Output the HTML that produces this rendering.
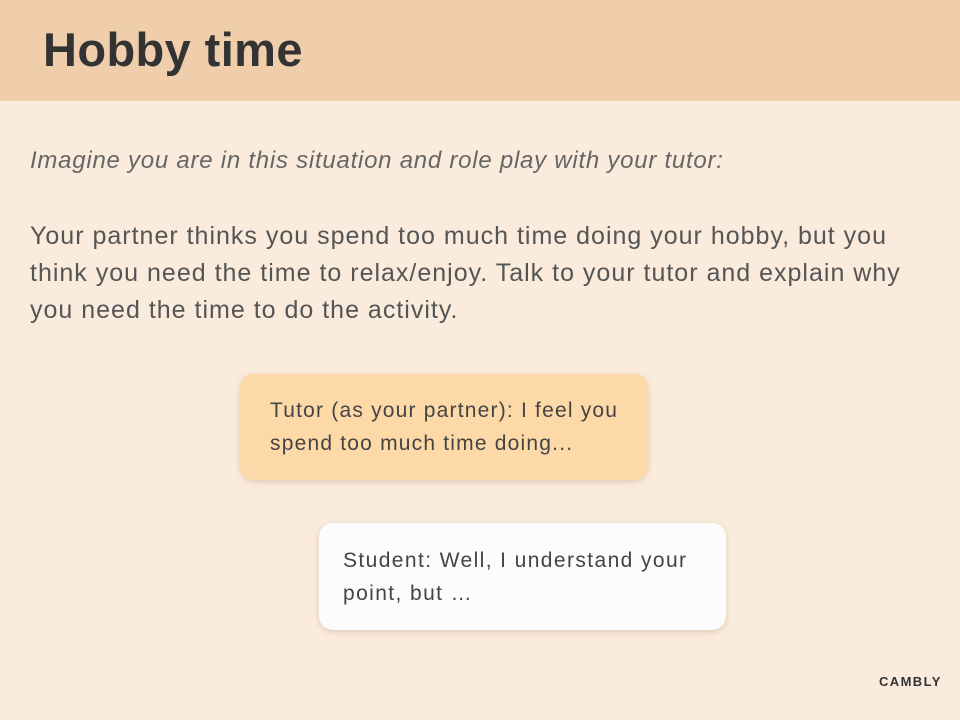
<!DOCTYPE html>
<html><head><style>
body{margin:0;width:960px;height:720px;background:#faebdd;font-family:"Liberation Sans",sans-serif;position:relative;overflow:hidden}
.hdr{position:absolute;left:0;top:0;width:960px;height:101px;background:#f0ceac}
h1{position:absolute;left:43px;top:22px;margin:0;font-size:47px;font-weight:bold;color:#333;letter-spacing:0.4px}
.it{position:absolute;left:30px;top:147px;font-size:24px;font-style:italic;color:#666;letter-spacing:0.75px;white-space:nowrap}
.p{position:absolute;left:30px;top:218px;width:930px;font-size:25px;line-height:37px;color:#555;letter-spacing:1px;white-space:nowrap}
.b{position:absolute;border-radius:14px;box-shadow:0 2px 6px rgba(150,110,70,0.25);font-size:21px;line-height:33px;color:#444;box-sizing:border-box;white-space:nowrap}
.b1{left:240px;top:374px;width:408px;height:106px;background:#fed9a8;padding:20px 0 0 30px;letter-spacing:1.2px}
.b2{left:319px;top:523px;width:407px;height:107px;background:#fcfcfc;padding:21px 0 0 24px;letter-spacing:1.4px}
.logo{position:absolute;left:879px;top:674px;font-size:13px;font-weight:bold;letter-spacing:1.4px;color:#333}
</style></head><body>
<div class="hdr"></div><h1>Hobby time</h1>
<div class="it">Imagine you are in this situation and role play with your tutor:</div>
<div class="p">Your partner thinks you spend too much time doing your hobby, but you<br>think you need the time to relax/enjoy. Talk to your tutor and explain why<br>you need the time to do the activity.</div>
<div class="b b1">Tutor (as your partner): I feel you<br>spend too much time doing...</div>
<div class="b b2">Student: Well, I understand your<br>point, but …</div>
<div class="logo">CAMBLY</div>
</body></html>
